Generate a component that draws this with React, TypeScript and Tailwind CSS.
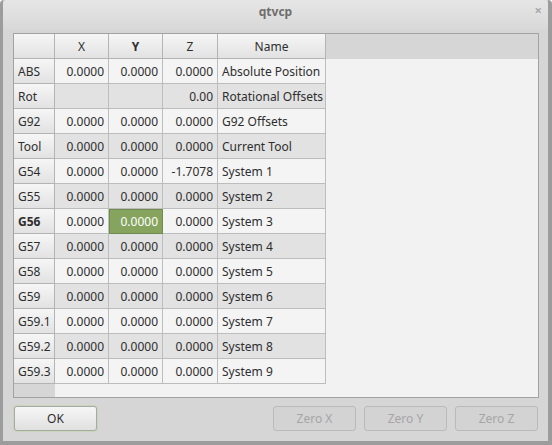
import { FC } from "react";

interface Row {
  label: string;
  x: string;
  y: string;
  z: string;
  name: string;
}

const rows: Row[] = [
  { label: "ABS", x: "0.0000", y: "0.0000", z: "0.0000", name: "Absolute Position" },
  { label: "Rot", x: "", y: "", z: "0.00", name: "Rotational Offsets" },
  { label: "G92", x: "0.0000", y: "0.0000", z: "0.0000", name: "G92 Offsets" },
  { label: "Tool", x: "0.0000", y: "0.0000", z: "0.0000", name: "Current Tool" },
  { label: "G54", x: "0.0000", y: "0.0000", z: "-1.7078", name: "System 1" },
  { label: "G55", x: "0.0000", y: "0.0000", z: "0.0000", name: "System 2" },
  { label: "G56", x: "0.0000", y: "0.0000", z: "0.0000", name: "System 3" },
  { label: "G57", x: "0.0000", y: "0.0000", z: "0.0000", name: "System 4" },
  { label: "G58", x: "0.0000", y: "0.0000", z: "0.0000", name: "System 5" },
  { label: "G59", x: "0.0000", y: "0.0000", z: "0.0000", name: "System 6" },
  { label: "G59.1", x: "0.0000", y: "0.0000", z: "0.0000", name: "System 7" },
  { label: "G59.2", x: "0.0000", y: "0.0000", z: "0.0000", name: "System 8" },
  { label: "G59.3", x: "0.0000", y: "0.0000", z: "0.0000", name: "System 9" },
];

const headCell =
  "h-[25px] pt-[2px] flex items-center justify-center border-r border-b border-[#b4b4b4] bg-gradient-to-b from-[#f6f6f6] to-[#e2e2e2] text-[#2e2e2e]";

const Cell: FC<{ text: string; w: string; bg: string; selected?: boolean }> = ({
  text,
  w,
  bg,
  selected,
}) => (
  <div
    className={`${w} h-[25px] pt-[2px] flex items-center justify-end pr-[4px] border-r border-b ${
      selected
        ? "bg-[#86a45e] text-white border-[#6c8a48] outline outline-1 -outline-offset-1 outline-[#6f8b4d]"
        : `${bg} border-[#bdbdbd] text-[#2e2e2e]`
    }`}
  >
    {text}
  </div>
);

const Button: FC<{ label: string; disabled?: boolean; focused?: boolean }> = ({
  label,
  disabled,
  focused,
}) => (
  <div
    className={`w-[83px] h-[25px] pt-[1px] flex items-center justify-center rounded-[3px] border ${
      disabled
        ? "bg-[#d3d3d3] border-[#bababa] text-[#a5a5a5]"
        : "bg-gradient-to-b from-[#f6f6f6] to-[#e0e0e0] border-[#a9a9a9] text-[#2e2e2e]"
    } ${focused ? "shadow-[0_0_0_1px_#c7d6b4]" : ""}`}
  >
    {label}
  </div>
);

export default function App() {
  return (
    <div
      className="w-[552px] h-[445px] bg-[#d6d6d6] border-l-[3px] border-r-[4px] border-b-[4px] border-[#9c9c9c] rounded-t-[4px] flex flex-col text-[12px]"
      style={{ fontFamily: '"Noto Sans", "Open Sans", sans-serif' }}
    >
      <div className="h-[30px] flex justify-center pt-[3px] relative bg-gradient-to-b from-[#e6e6e6] to-[#d8d8d8] rounded-t-[4px]">
        <span className="font-bold text-[#6e6e6e] text-[12px] leading-[18px]">qtvcp</span>
        <span className="absolute right-[6px] top-[1px] text-[#a8a8a8] text-[13px] font-bold">×</span>
      </div>

      <div className="pl-[10px] pr-[9px] pt-[3px]">
        <div className="h-[365px] border border-[#a2a2a2] flex flex-col bg-[#f2f2f2]">
          <div className="flex bg-[#d6d6d6]">
            <div className={`w-[41px] ${headCell}`}></div>
            <div className={`w-[54px] ${headCell}`}>X</div>
            <div className={`w-[54px] ${headCell} font-bold`}>Y</div>
            <div className={`w-[55px] ${headCell}`}>Z</div>
            <div className={`w-[108px] ${headCell}`}>Name</div>
          </div>
          {rows.map((r, i) => {
            const bg = i % 2 === 0 ? "bg-[#f4f4f4]" : "bg-[#e2e2e2]";
            return (
              <div key={r.label} className="flex">
                <div
                  className={`w-[41px] h-[25px] pt-[2px] flex items-center pl-[4px] border-r border-b border-[#b4b4b4] bg-gradient-to-b from-[#f6f6f6] to-[#e2e2e2] text-[#2e2e2e] ${
                    r.label === "G56" ? "font-bold" : ""
                  }`}
                >
                  {r.label}
                </div>
                <Cell text={r.x} w="w-[54px]" bg={bg} />
                <Cell text={r.y} w="w-[54px]" bg={bg} selected={r.label === "G56"} />
                <Cell text={r.z} w="w-[55px]" bg={bg} />
                <div
                  className={`w-[108px] h-[25px] pt-[2px] flex items-center pl-[4px] border-r border-b border-[#bdbdbd] ${bg} text-[#2e2e2e] whitespace-nowrap`}
                >
                  {r.name}
                </div>
              </div>
            );
          })}
          <div className="flex-1 flex">
            <div className="w-[41px] bg-[#d6d6d6]"></div>
          </div>
        </div>
      </div>

      <div className="flex items-center pl-[11px] pr-[10px] pt-[8px]">
        <Button label="OK" focused />
        <div className="flex-1"></div>
        <div className="flex gap-[8px]">
          <Button label="Zero X" disabled />
          <Button label="Zero Y" disabled />
          <Button label="Zero Z" disabled />
        </div>
      </div>
    </div>
  );
}
